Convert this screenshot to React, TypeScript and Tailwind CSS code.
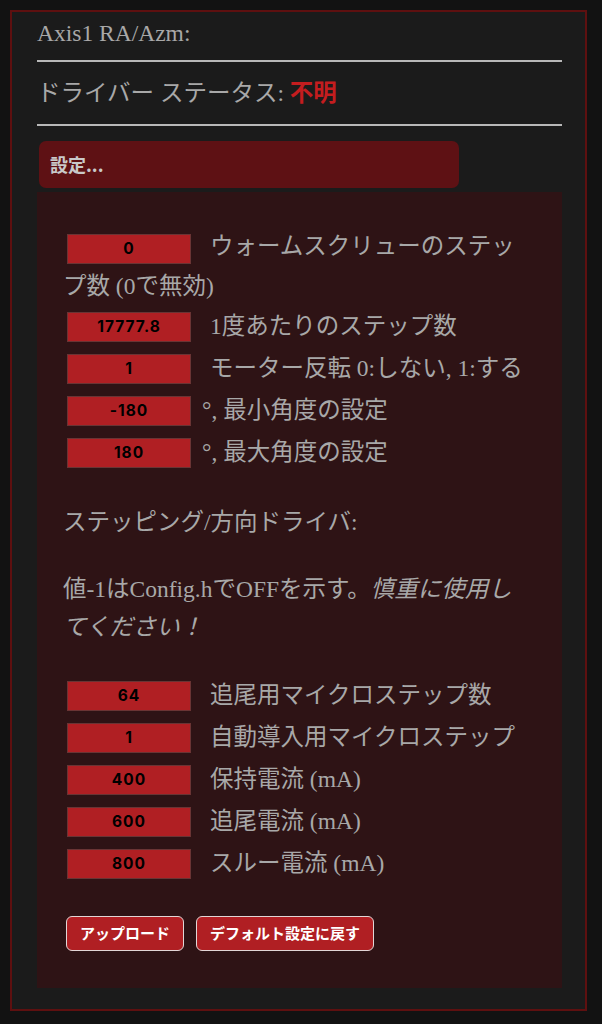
import React from "react";

const serif = "font-['Liberation_Serif','Noto_Sans_CJK_JP',serif]";

type Row = { value: string; label: React.ReactNode; tight?: boolean };

const motorRows: Row[] = [
  { value: "17777.8", label: "1度あたりのステップ数" },
  { value: "1", label: "モーター反転 0:しない, 1:する" },
  { value: "-180", label: "°, 最小角度の設定", tight: true },
  { value: "180", label: "°, 最大角度の設定", tight: true },
];

const driverRows: Row[] = [
  { value: "64", label: "追尾用マイクロステップ数" },
  { value: "1", label: "自動導入用マイクロステップ" },
  { value: "400", label: "保持電流 (mA)" },
  { value: "600", label: "追尾電流 (mA)" },
  { value: "800", label: "スルー電流 (mA)" },
];

const ValueBox: React.FC<{ value: string; className?: string }> = ({ value, className = "" }) => (
  <span
    className={`inline-flex h-[30px] w-[124px] shrink-0 items-center justify-center border border-[#6a3434] bg-[#b01f23] font-['Inter',sans-serif] text-[15.5px] font-bold leading-none tracking-[1px] text-black ${className}`}
  >
    {value}
  </span>
);

const InputRow: React.FC<{ row: Row }> = ({ row }) => (
  <div className="flex h-[42px] items-center">
    <ValueBox value={row.value} className="ml-[4px]" />
    <span className={`${row.tight ? "ml-[11px]" : "ml-[19px]"} whitespace-nowrap leading-none`}>{row.label}</span>
  </div>
);

const App: React.FC = () => {
  return (
    <main className={`min-h-screen bg-[#121212] pt-[10px] ${serif} text-[23.5px] text-[#a8a8a8]`}>
      <div className="ml-[10px] w-[577px] border-2 border-[#5e1010] bg-[#1b1b1b] pb-[21px] pl-[25px] pr-[23px]">
        {/* header */}
        <div className="leading-[42px]">Axis1 RA/Azm:</div>
        <div className="mt-[6px] h-[2px] bg-[#b8b8b8]" />
        <div className="mt-[10px] leading-[42px]">
          ドライバー ステータス: <b className="text-[#c41d1f]">不明</b>
        </div>
        <div className="mt-[10px] h-[2px] bg-[#b8b8b8]" />

        {/* collapsible settings */}
        <div className="ml-[2px] mt-[15px] flex h-[47px] w-[420px] items-center rounded-[7px] bg-[#5e1114] pl-[11px] font-['Noto_Sans_CJK_JP',sans-serif] text-[18px] font-bold text-[#c9c9c9]">
          設定...
        </div>

        <div className="mt-[4px] bg-[#2e1315] pb-[37px] pl-[26px] pr-[30px] pt-[34px]">
          <p className="leading-[40px]">
            <ValueBox value="0" className="ml-[4px] mr-[19px] align-middle" />
            ウォームスクリューのステップ数 (0で無効)
          </p>
          {motorRows.map((r, i) => (
            <InputRow key={i} row={r} />
          ))}

          <p className="mt-[29px] leading-[38px]">ステッピング/方向ドライバ:</p>
          <p className="mt-[29px] leading-[38px]">
            値-1はConfig.hでOFFを示す。<em>慎重に使用してください！</em>
          </p>

          <div className="mt-[29px]">
            {driverRows.map((r, i) => (
              <InputRow key={i} row={r} />
            ))}
          </div>

          <div className="ml-[3px] mt-[31px] flex gap-[12px] font-['Noto_Sans_CJK_JP',sans-serif] text-[15px] font-bold text-white">
            <button className="h-[35px] rounded-[6px] border border-[#e2d6d6] bg-[#b01f23] px-[13px]">アップロード</button>
            <button className="h-[35px] rounded-[6px] border border-[#e2d6d6] bg-[#b01f23] px-[13px]">デフォルト設定に戻す</button>
          </div>
        </div>
      </div>
    </main>
  );
};

export default App;
